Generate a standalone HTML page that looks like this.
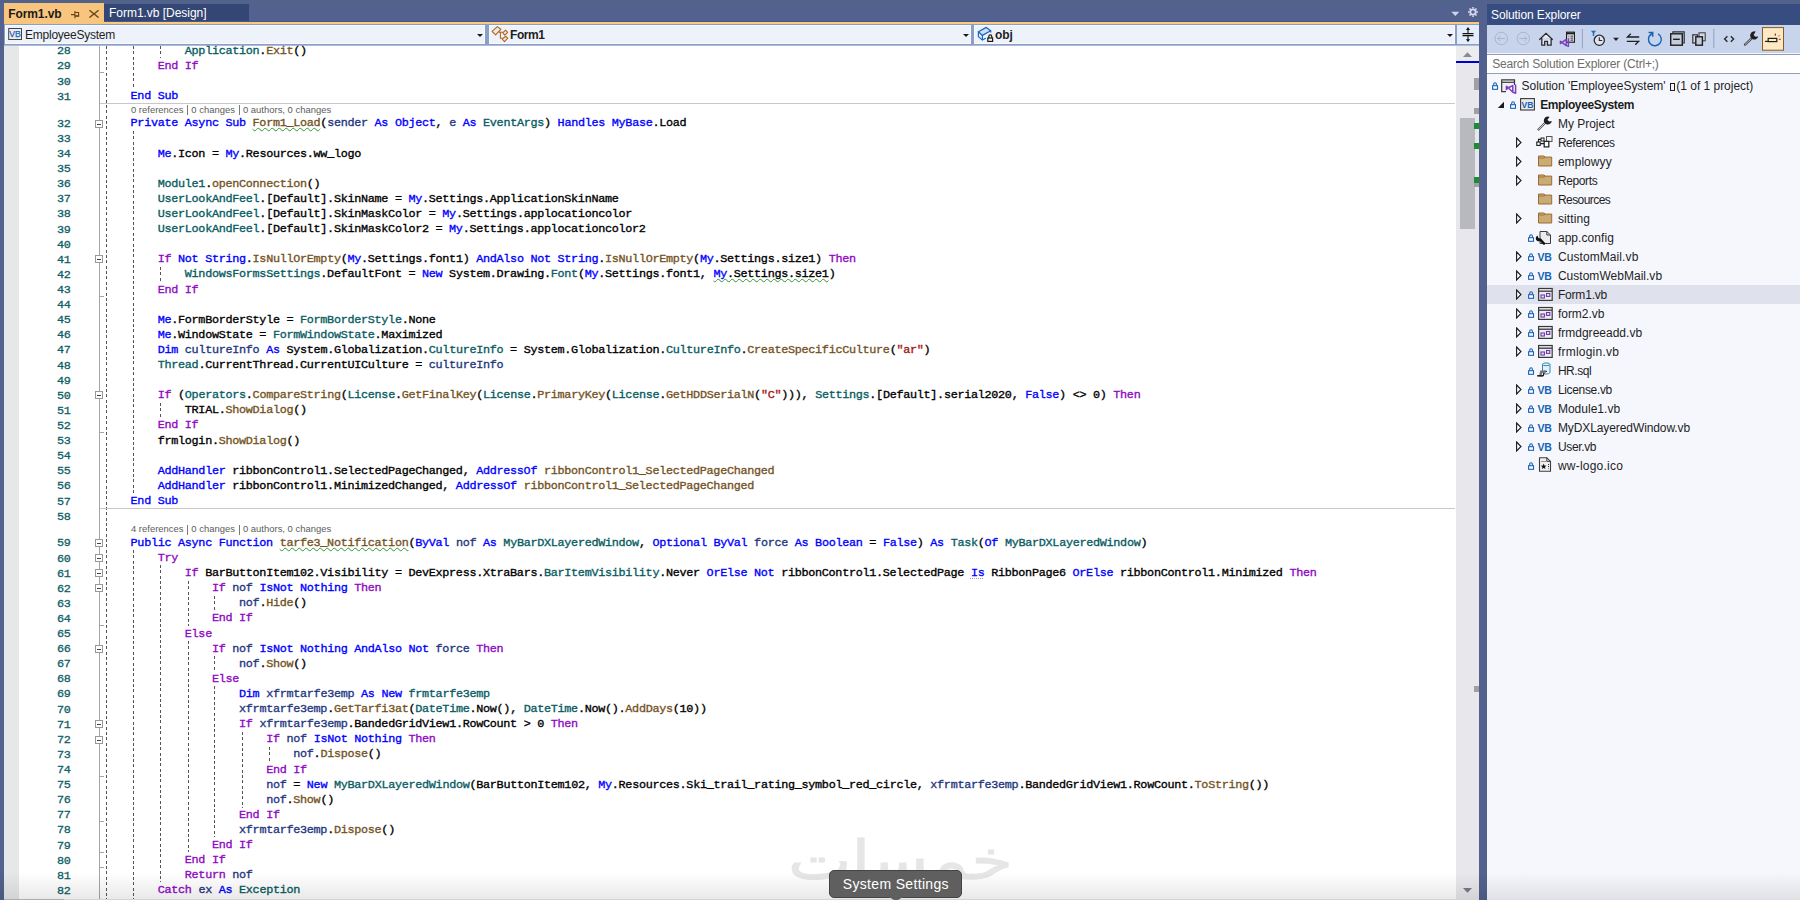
<!DOCTYPE html>
<html lang="en"><head><meta charset="utf-8"><title>Form1.vb - EmployeeSystem</title>
<style>
*{box-sizing:border-box;margin:0;padding:0}
html,body{width:1800px;height:900px;overflow:hidden}
body{position:relative;background:#52618d;font-family:"Liberation Sans",sans-serif;font-size:12px;color:#1e1e1e}
.abs,.abs>*{position:absolute}
/* tabs */
#tabA{left:4px;top:3px;width:100px;height:21px;background:#f8c57f;z-index:2}
#tabA span{position:absolute;left:4.3px;top:4px;font-weight:bold;font-size:12px;color:#1a1a1a;letter-spacing:-0.11px}
#tabB{left:104px;top:4px;width:145px;height:17px;background:#344674}
#tabB span{position:absolute;left:5px;top:2.3px;font-size:12px;color:#fff;letter-spacing:-0.03px}
#well{left:0;top:0;width:1800px;height:3px;background:#51638b;z-index:0}
#oline{left:4px;top:21px;width:1475px;height:3px;background:linear-gradient(to bottom,#44598f 0,#44598f .8px,#fdc97c .8px)}
/* nav */
#nav{left:4px;top:24px;width:1475px;height:22px;background:linear-gradient(to bottom,#8a9fc8 0,#8a9fc8 20.5px,#aebcda 21px,#aebcda 22px)}
.cb{top:1px;height:19px;background:#eef2fb;box-shadow:inset 0 0 0 1px #f8fafe}
.cb span{position:absolute;top:3px;font-size:12px;color:#1e1e1e;white-space:pre}
.cb .ar{position:absolute;right:2px;top:9px;width:0;height:0;border:3px solid transparent;border-top:3px solid #1a1a1a;border-bottom:0}
/* editor */
#ed{left:4px;top:46px;width:1452px;height:854px;background:#fff;overflow:hidden}
#mg{left:4px;top:46px;width:15px;height:854px;background:#e6e7e8}
#ol{left:99px;top:46px;width:1px;height:854px;background:#a5a5a5}
.ln{-webkit-text-stroke:0.3px;position:absolute;left:30px;width:40.5px;text-align:right;font:11.800px/15px "Liberation Mono",monospace;letter-spacing:-0.3032px;color:#0c6066;white-space:pre}
.cl{-webkit-text-stroke:0.34px;position:absolute;font:11.800px/15px "Liberation Mono",monospace;letter-spacing:-0.3032px;color:#000;white-space:pre}
.k{color:#0000ff}.c{color:#8f08c4}.t{color:#085c62}.m{color:#74531f}.v{color:#1f377f}.s{color:#a31515}
.sq{text-decoration:underline wavy #2f962f 1px;text-underline-offset:1.2px;text-decoration-skip-ink:none}
.dt{text-decoration:underline dotted #999 1px;text-underline-offset:2px;text-decoration-skip-ink:none}
.lens{position:absolute;left:131px;width:220px;height:12px;font-size:9.45px;line-height:12px;color:#5c5c5c;white-space:pre}
.lens span{position:absolute;top:0}
.lens i{position:absolute;top:1.5px;width:1px;height:10px;background:#7a7a7a}
.sep{position:absolute;left:100px;width:1355px;height:1px;background:#c8c8c8}
.bx{position:absolute;left:95px;width:8px;height:8px;background:#fff;border:1px solid #999}
.bx b{position:absolute;left:1px;top:2.5px;width:4px;height:1px;background:#444}
.tk{position:absolute;left:100px;width:4px;height:1px;background:#a5a5a5}
.gd{position:absolute;width:1px;background:repeating-linear-gradient(to bottom,#555 0,#555 3px,transparent 3px,transparent 5.36px)}
/* scrollbar */
#sb{left:1456px;top:46px;width:23px;height:854px;background:#e8e8ec}
#wm{left:788px;top:829px;font:67.5px/80px "DejaVu Sans","Noto Sans CJK SC",sans-serif;color:#e6e6e6;-webkit-text-stroke:1.2px #e6e6e6;white-space:nowrap;transform:scaleY(.8);transform-origin:0 0}
#shade{left:0;top:872px;width:1800px;height:28px;background:linear-gradient(to bottom,rgba(0,0,0,0),rgba(0,0,0,.09))}
#bl1{left:4px;top:899px;width:60px;height:1px;background:#adadad}
#bl2{left:64px;top:899px;width:1415px;height:1px;background:#d4d4d4}
#tip{left:829px;top:870px;width:133px;height:27.5px;background:#5f5f5f;border:1px solid #444;border-radius:5px}
#tip span{position:absolute;left:12.8px;top:5px;font-size:14px;line-height:16px;color:#fff;letter-spacing:.33px;white-space:pre}
</style></head><body>
<div class="abs" id="root">
<div id="well"></div>
<div id="tabA"><span>Form1.vb</span>
<svg style="position:absolute;left:67px;top:8px" width="9" height="8" viewBox="0 0 9 8"><path d="M0 3.6H3.8M3.9 0V7.2M3.9 1.5H7.6V5.2" fill="none" stroke="#6b4516" stroke-width="1.1"/><path d="M3.9 5H8.1" stroke="#6b4516" stroke-width="1.7"/></svg>
<svg style="position:absolute;left:85px;top:7px" width="10" height="8" viewBox="0 0 10 8"><path d="M.4 .2L9.6 7.6M9.6 .2L.4 7.6" stroke="#6b4516" stroke-width="1.3" fill="none"/></svg>
</div>
<div id="tabB"><span>Form1.vb [Design]</span></div>
<div id="oline"></div>
<svg style="left:1451px;top:11px" width="9" height="6" viewBox="0 0 9 6"><path d="M.3 .8H8.3L4.3 5Z" fill="#cdd5f0"/></svg>
<svg style="left:1467px;top:6px" width="12" height="12" viewBox="0 0 12 12"><g fill="none" stroke="#d5daf0"><circle cx="6" cy="6" r="2.7" stroke-width="1.8"/><path d="M6 1V2.6M6 9.4V11M1 6H2.6M9.4 6H11M2.5 2.5L3.6 3.6M8.4 8.4L9.5 9.5M2.5 9.5L3.6 8.4M8.4 3.6L9.5 2.5" stroke-width="1.5"/></g></svg>
<div id="nav" class="abs">
 <div class="cb" style="left:1px;width:480px"><svg style="position:absolute;left:3px;top:3px" width="14" height="12" viewBox="0 0 14 12"><rect x=".7" y=".5" width="12.8" height="11" fill="#ebebf0" stroke="#444"/><text x="7.1" y="9.2" font-family="Liberation Sans, sans-serif" font-size="8.6" fill="#1565c0" stroke="#1565c0" stroke-width=".25" text-anchor="middle">VB</text></svg><span style="left:20px;letter-spacing:-0.24px">EmployeeSystem</span><div class="ar"></div></div>
 <div class="cb" style="left:485px;width:482px"><svg style="position:absolute;left:2px;top:1px" width="18" height="17" viewBox="0 0 18 17"><g fill="#e9e9e9" stroke="#b5651d" stroke-width="1.1" stroke-linejoin="round"><path d="M6.3 .6L9.8 3.3L4.6 8.8L1.1 5.4Z"/><path d="M7.6 6.1H9.4V12.3H11.4M9.4 6.3H12" fill="none"/><path d="M14.5 4.1L16.7 6.3L13.8 9.2L11.8 6.8Z"/><path d="M14.9 10.3L16.7 12.2L13.5 15.7L11.1 13Z"/></g></svg><span style="left:21px;font-weight:bold;letter-spacing:-0.45px">Form1</span><div class="ar"></div></div>
 <div class="cb" style="left:970px;width:481px"><svg style="position:absolute;left:3px;top:1px" width="18" height="17" viewBox="0 0 18 17"><path d="M1.4 5.8L9.3 1.4L13.7 4.8L5.4 9.4Z" fill="#d5dcf2" stroke="#1468c4" stroke-width="1.3" stroke-linejoin="round"/><path d="M1.4 5.8V10.6L5.4 14.1V9.4M5.4 14.1L8.8 12.2M13.7 4.8V6.6" fill="none" stroke="#1468c4" stroke-width="1.2" stroke-linejoin="round"/><rect x="10.8" y="12" width="4.8" height="3.4" fill="#f4f4f4" stroke="#1a1a1a" stroke-width="1.2"/><path d="M11.8 12V10.4A1.5 1.6 0 0 1 14.8 10.4V12" fill="none" stroke="#1a1a1a" stroke-width="1.2"/></svg><span style="left:21px;font-weight:bold;letter-spacing:-0.13px">obj</span><div class="ar"></div></div>
 <div style="left:1453px;top:1px;width:22px;height:19px;background:#e4edf9"><svg width="22" height="19" viewBox="0 0 22 19"><path d="M5.5 8.6H16.5M5.5 10.6H16.5M11 2.6V8M11 11.2V16.6" fill="none" stroke="#111" stroke-width="1.1"/><path d="M8.8 5L11 2.4L13.2 5ZM8.8 14.2L11 16.8L13.2 14.2Z" fill="#111"/></svg></div>
</div>
<div id="ed"></div>
<div id="mg"></div>
<div id="ol"></div>
<div id="code" style="left:0;top:0;width:1456px;height:900px;overflow:hidden">
<div class="gd" style="left:106px;top:46px;height:854px"></div>
<div class="gd" style="left:133px;top:46px;height:42px"></div>
<div class="gd" style="left:133px;top:131px;height:363px"></div>
<div class="gd" style="left:133px;top:550px;height:350px"></div>
<div class="gd" style="left:160px;top:46px;height:12px"></div>
<div class="gd" style="left:160px;top:267px;height:15px"></div>
<div class="gd" style="left:160px;top:403px;height:15px"></div>
<div class="gd" style="left:160px;top:565px;height:317px"></div>
<div class="gd" style="left:188px;top:581px;height:45px"></div>
<div class="gd" style="left:188px;top:641px;height:211px"></div>
<div class="gd" style="left:214px;top:596px;height:15px"></div>
<div class="gd" style="left:214px;top:656px;height:15px"></div>
<div class="gd" style="left:214px;top:686px;height:151px"></div>
<div class="gd" style="left:242px;top:732px;height:76px"></div>
<div class="gd" style="left:269px;top:747px;height:15px"></div>
<div class="sep" style="top:103px"></div>
<div class="sep" style="top:508px"></div>
<div class="bx" style="top:120px"><b></b></div>
<div class="bx" style="top:255px"><b></b></div>
<div class="bx" style="top:391px"><b></b></div>
<div class="bx" style="top:539px"><b></b></div>
<div class="bx" style="top:554px"><b></b></div>
<div class="bx" style="top:569px"><b></b></div>
<div class="bx" style="top:584px"><b></b></div>
<div class="bx" style="top:645px"><b></b></div>
<div class="bx" style="top:720px"><b></b></div>
<div class="bx" style="top:736px"><b></b></div>
<div class="tk" style="top:72px"></div>
<div class="tk" style="top:296px"></div>
<div class="tk" style="top:432px"></div>
<div class="tk" style="top:625px"></div>
<div class="tk" style="top:776px"></div>
<div class="tk" style="top:821px"></div>
<div class="tk" style="top:852px"></div>
<div class="tk" style="top:867px"></div>
<div class="lens" style="top:103.53px"><span style="left:0">0 references</span><i style="left:56px"></i><span style="left:60.3px">0 changes</span><i style="left:107.6px"></i><span style="left:112px">0 authors, 0 changes</span></div>
<div class="lens" style="top:523.12px"><span style="left:0">4 references</span><i style="left:56px"></i><span style="left:60.3px">0 changes</span><i style="left:107.6px"></i><span style="left:112px">0 authors, 0 changes</span></div>
<div class="ln" style="top:44.30px">28</div>
<div class="cl" style="top:43.80px;left:184.82px"><span class="t">Application</span>.<span class="m">Exit</span>()</div>
<div class="ln" style="top:59.41px">29</div>
<div class="cl" style="top:58.91px;left:157.71px"><span class="c">End If</span></div>
<div class="ln" style="top:74.51px">30</div>
<div class="ln" style="top:89.62px">31</div>
<div class="cl" style="top:89.12px;left:130.60px"><span class="k">End Sub</span></div>
<div class="ln" style="top:116.83px">32</div>
<div class="cl" style="top:116.33px;left:130.60px"><span class="k">Private Async Sub</span> <span class="sq m">Form1_Load</span>(<span class="v">sender</span> <span class="k">As Object</span>, <span class="v">e</span> <span class="k">As</span> <span class="t">EventArgs</span>) <span class="k">Handles MyBase</span>.Load</div>
<div class="ln" style="top:131.94px">33</div>
<div class="ln" style="top:147.04px">34</div>
<div class="cl" style="top:146.54px;left:157.71px"><span class="k">Me</span>.Icon = <span class="k">My</span>.Resources.ww_logo</div>
<div class="ln" style="top:162.15px">35</div>
<div class="ln" style="top:177.26px">36</div>
<div class="cl" style="top:176.76px;left:157.71px"><span class="t">Module1</span>.<span class="m">openConnection</span>()</div>
<div class="ln" style="top:192.36px">37</div>
<div class="cl" style="top:191.86px;left:157.71px"><span class="t">UserLookAndFeel</span>.[Default].SkinName = <span class="k">My</span>.Settings.ApplicationSkinName</div>
<div class="ln" style="top:207.47px">38</div>
<div class="cl" style="top:206.97px;left:157.71px"><span class="t">UserLookAndFeel</span>.[Default].SkinMaskColor = <span class="k">My</span>.Settings.applocationcolor</div>
<div class="ln" style="top:222.58px">39</div>
<div class="cl" style="top:222.08px;left:157.71px"><span class="t">UserLookAndFeel</span>.[Default].SkinMaskColor2 = <span class="k">My</span>.Settings.applocationcolor2</div>
<div class="ln" style="top:237.68px">40</div>
<div class="ln" style="top:252.79px">41</div>
<div class="cl" style="top:252.29px;left:157.71px"><span class="c">If</span> <span class="k">Not String</span>.<span class="m">IsNullOrEmpty</span>(<span class="k">My</span>.Settings.font1) <span class="k">AndAlso Not String</span>.<span class="m">IsNullOrEmpty</span>(<span class="k">My</span>.Settings.size1) <span class="c">Then</span></div>
<div class="ln" style="top:267.90px">42</div>
<div class="cl" style="top:267.40px;left:184.82px"><span class="t">WindowsFormsSettings</span>.DefaultFont = <span class="k">New</span> System.Drawing.<span class="t">Font</span>(<span class="k">My</span>.Settings.font1, <span class="sq"><span class="k">My</span>.Settings.size1</span>)</div>
<div class="ln" style="top:283.00px">43</div>
<div class="cl" style="top:282.50px;left:157.71px"><span class="c">End If</span></div>
<div class="ln" style="top:298.11px">44</div>
<div class="ln" style="top:313.22px">45</div>
<div class="cl" style="top:312.72px;left:157.71px"><span class="k">Me</span>.FormBorderStyle = <span class="t">FormBorderStyle</span>.None</div>
<div class="ln" style="top:328.33px">46</div>
<div class="cl" style="top:327.83px;left:157.71px"><span class="k">Me</span>.WindowState = <span class="t">FormWindowState</span>.Maximized</div>
<div class="ln" style="top:343.43px">47</div>
<div class="cl" style="top:342.93px;left:157.71px"><span class="k">Dim</span> <span class="v">cultureInfo</span> <span class="k">As</span> System.Globalization.<span class="t">CultureInfo</span> = System.Globalization.<span class="t">CultureInfo</span>.<span class="m">CreateSpecificCulture</span>(<span class="s">&quot;ar&quot;</span>)</div>
<div class="ln" style="top:358.54px">48</div>
<div class="cl" style="top:358.04px;left:157.71px"><span class="t">Thread</span>.CurrentThread.CurrentUICulture = <span class="v">cultureInfo</span></div>
<div class="ln" style="top:373.65px">49</div>
<div class="ln" style="top:388.75px">50</div>
<div class="cl" style="top:388.25px;left:157.71px"><span class="c">If</span> (<span class="t">Operators</span>.<span class="m">CompareString</span>(<span class="t">License</span>.<span class="m">GetFinalKey</span>(<span class="t">License</span>.<span class="m">PrimaryKey</span>(<span class="t">License</span>.<span class="m">GetHDDSerialN</span>(<span class="s">&quot;C&quot;</span>))), <span class="t">Settings</span>.[Default].serial2020, <span class="k">False</span>) &lt;&gt; 0) <span class="c">Then</span></div>
<div class="ln" style="top:403.86px">51</div>
<div class="cl" style="top:403.36px;left:184.82px">TRIAL.<span class="m">ShowDialog</span>()</div>
<div class="ln" style="top:418.97px">52</div>
<div class="cl" style="top:418.47px;left:157.71px"><span class="c">End If</span></div>
<div class="ln" style="top:434.07px">53</div>
<div class="cl" style="top:433.57px;left:157.71px">frmlogin.<span class="m">ShowDialog</span>()</div>
<div class="ln" style="top:449.18px">54</div>
<div class="ln" style="top:464.29px">55</div>
<div class="cl" style="top:463.79px;left:157.71px"><span class="k">AddHandler</span> ribbonControl1.SelectedPageChanged, <span class="k">AddressOf</span> <span class="m">ribbonControl1_SelectedPageChanged</span></div>
<div class="ln" style="top:479.40px">56</div>
<div class="cl" style="top:478.90px;left:157.71px"><span class="k">AddHandler</span> ribbonControl1.MinimizedChanged, <span class="k">AddressOf</span> <span class="m">ribbonControl1_SelectedPageChanged</span></div>
<div class="ln" style="top:494.50px">57</div>
<div class="cl" style="top:494.00px;left:130.60px"><span class="k">End Sub</span></div>
<div class="ln" style="top:509.61px">58</div>
<div class="ln" style="top:536.42px">59</div>
<div class="cl" style="top:535.92px;left:130.60px"><span class="k">Public Async Function</span> <span class="sq m">tarfe3_Notification</span>(<span class="k">ByVal</span> <span class="v">nof</span> <span class="k">As</span> <span class="t">MyBarDXLayeredWindow</span>, <span class="k">Optional ByVal</span> <span class="v">force</span> <span class="k">As Boolean</span> = <span class="k">False</span>) <span class="k">As</span> <span class="t">Task</span>(<span class="k">Of</span> <span class="t">MyBarDXLayeredWindow</span>)</div>
<div class="ln" style="top:551.52px">60</div>
<div class="cl" style="top:551.02px;left:157.71px"><span class="c">Try</span></div>
<div class="ln" style="top:566.63px">61</div>
<div class="cl" style="top:566.13px;left:184.82px"><span class="c">If</span> BarButtonItem102.Visibility = DevExpress.XtraBars.<span class="t">BarItemVisibility</span>.Never <span class="k">OrElse Not</span> ribbonControl1.SelectedPage <span class="dt"><span class="k">Is</span></span> RibbonPage6 <span class="k">OrElse</span> ribbonControl1.Minimized <span class="c">Then</span></div>
<div class="ln" style="top:581.74px">62</div>
<div class="cl" style="top:581.24px;left:211.94px"><span class="c">If</span> <span class="v">nof</span> <span class="k">IsNot Nothing</span> <span class="c">Then</span></div>
<div class="ln" style="top:596.85px">63</div>
<div class="cl" style="top:596.35px;left:239.05px"><span class="v">nof</span>.<span class="m">Hide</span>()</div>
<div class="ln" style="top:611.95px">64</div>
<div class="cl" style="top:611.45px;left:211.94px"><span class="c">End If</span></div>
<div class="ln" style="top:627.06px">65</div>
<div class="cl" style="top:626.56px;left:184.82px"><span class="c">Else</span></div>
<div class="ln" style="top:642.17px">66</div>
<div class="cl" style="top:641.67px;left:211.94px"><span class="c">If</span> <span class="v">nof</span> <span class="k">IsNot Nothing AndAlso Not</span> <span class="v">force</span> <span class="c">Then</span></div>
<div class="ln" style="top:657.27px">67</div>
<div class="cl" style="top:656.77px;left:239.05px"><span class="v">nof</span>.<span class="m">Show</span>()</div>
<div class="ln" style="top:672.38px">68</div>
<div class="cl" style="top:671.88px;left:211.94px"><span class="c">Else</span></div>
<div class="ln" style="top:687.49px">69</div>
<div class="cl" style="top:686.99px;left:239.05px"><span class="k">Dim</span> <span class="v">xfrmtarfe3emp</span> <span class="k">As New</span> <span class="t">frmtarfe3emp</span></div>
<div class="ln" style="top:702.59px">70</div>
<div class="cl" style="top:702.09px;left:239.05px"><span class="v">xfrmtarfe3emp</span>.<span class="m">GetTarfi3at</span>(<span class="t">DateTime</span>.Now(), <span class="t">DateTime</span>.Now().<span class="m">AddDays</span>(10))</div>
<div class="ln" style="top:717.70px">71</div>
<div class="cl" style="top:717.20px;left:239.05px"><span class="c">If</span> <span class="v">xfrmtarfe3emp</span>.BandedGridView1.RowCount &gt; 0 <span class="c">Then</span></div>
<div class="ln" style="top:732.81px">72</div>
<div class="cl" style="top:732.31px;left:266.16px"><span class="c">If</span> <span class="v">nof</span> <span class="k">IsNot Nothing</span> <span class="c">Then</span></div>
<div class="ln" style="top:747.91px">73</div>
<div class="cl" style="top:747.41px;left:293.27px"><span class="v">nof</span>.<span class="m">Dispose</span>()</div>
<div class="ln" style="top:763.02px">74</div>
<div class="cl" style="top:762.52px;left:266.16px"><span class="c">End If</span></div>
<div class="ln" style="top:778.13px">75</div>
<div class="cl" style="top:777.63px;left:266.16px"><span class="v">nof</span> = <span class="k">New</span> <span class="t">MyBarDXLayeredWindow</span>(BarButtonItem102, <span class="k">My</span>.Resources.Ski_trail_rating_symbol_red_circle, <span class="v">xfrmtarfe3emp</span>.BandedGridView1.RowCount.<span class="m">ToString</span>())</div>
<div class="ln" style="top:793.24px">76</div>
<div class="cl" style="top:792.74px;left:266.16px"><span class="v">nof</span>.<span class="m">Show</span>()</div>
<div class="ln" style="top:808.34px">77</div>
<div class="cl" style="top:807.84px;left:239.05px"><span class="c">End If</span></div>
<div class="ln" style="top:823.45px">78</div>
<div class="cl" style="top:822.95px;left:239.05px"><span class="v">xfrmtarfe3emp</span>.<span class="m">Dispose</span>()</div>
<div class="ln" style="top:838.56px">79</div>
<div class="cl" style="top:838.06px;left:211.94px"><span class="c">End If</span></div>
<div class="ln" style="top:853.66px">80</div>
<div class="cl" style="top:853.16px;left:184.82px"><span class="c">End If</span></div>
<div class="ln" style="top:868.77px">81</div>
<div class="cl" style="top:868.27px;left:184.82px"><span class="c">Return</span> <span class="v">nof</span></div>
<div class="ln" style="top:883.88px">82</div>
<div class="cl" style="top:883.38px;left:157.71px"><span class="c">Catch</span> <span class="v">ex</span> <span class="k">As</span> <span class="t">Exception</span></div>
</div>
<div id="sb" class="abs">
<div style="left:0;top:0;width:23px;height:16px;background:#ececee"></div>
<svg style="left:7px;top:6px" width="9" height="5" viewBox="0 0 9 5"><path d="M0 5L4.5 .3L9 5Z" fill="#868999"/></svg>
<div style="left:0;top:15px;width:23px;height:2px;background:#0000cc"></div>
<div style="left:18px;top:32px;width:5px;height:12px;background:#a0a0a0"></div>
<div style="left:18px;top:62px;width:5px;height:6px;background:#a0a0a0"></div>
<div style="left:4px;top:72px;width:15px;height:111px;background:#b8b9bf"></div>
<div style="left:18px;top:77px;width:5px;height:6px;background:#1e8c2e"></div>
<div style="left:18px;top:97px;width:5px;height:6px;background:#1e8c2e"></div>
<div style="left:18px;top:131px;width:5px;height:6px;background:#1e8c2e"></div>
<div style="left:18px;top:137px;width:5px;height:4px;background:#a0a0a0"></div>
<div style="left:18px;top:640px;width:5px;height:6px;background:#a0a0a0"></div>
<svg style="left:7px;top:842px" width="9" height="5" viewBox="0 0 9 5"><path d="M0 0L4.5 4.7L9 0Z" fill="#777a8c"/></svg>
</div>
<style>
#se{left:1487px;top:4px;width:313px;height:896px;background:#f5f7fd}
#setitle{left:0;top:0;width:313px;height:21px;background:#374c80}
#setitle span{position:absolute;left:4px;top:4px;color:#fff;font-size:12px;letter-spacing:-0.1px;white-space:pre}
#setb{left:0;top:21px;width:313px;height:28px;background:#c8d3ec}
#sesearch{left:0;top:50px;width:313px;height:20px;background:#fff;border-top:1px solid #8e9bbc;border-bottom:1px solid #929dbb}
#sesearch span{position:absolute;left:5.3px;top:2px;color:#6d6d6d;font-size:12px;letter-spacing:-0.205px;white-space:pre}
#setree{left:0;top:0;width:313px;height:896px}
.tx{white-space:pre;font-size:12px;line-height:15px;color:#1e1e1e}
.tofu{display:inline-block;width:5px;height:8px;border:1px solid #1e1e1e;margin:0 1.5px 0 1px;vertical-align:-0.5px}
</style>
<div id="se" class="abs">
<div id="setitle"><span>Solution Explorer</span></div>
<div id="setb" class="abs"><svg style="left:0;top:0" width="313" height="28" viewBox="0 0 313 28">
<g fill="none" stroke="#a9b4d0" stroke-width="1"><circle cx="14.3" cy="13.5" r="6.2"/><path d="M18.2 13.5H10.6M13.3 10.8L10.6 13.5L13.3 16.2"/><circle cx="36.3" cy="13.5" r="6.2"/><path d="M32.4 13.5H40M37.3 10.8L40 13.5L37.3 16.2"/></g>
<path d="M52.3 14.8L59 8.3L65.7 14.8M54.8 13.2V20.2H57.7V16.4H60.5V20.2H64.1V13.2" fill="#e4e8f4" stroke="#2a2a2a" stroke-width="1.3"/>
<rect x="79.6" y="7.2" width="7.8" height="10" fill="#f2f4fa" stroke="#1e1e1e" stroke-width="1.2"/><path d="M79.6 8.6H87.4" stroke="#1e1e1e" stroke-width="1.5"/><path d="M81.4 11.1H82.4M83.4 11.1H86M81.4 13.1H82.4M83.4 13.1H86M81.4 15.1H82.4M83.4 15.1H86" stroke="#1e1e1e" stroke-width="1"/>
<path d="M81.4 13.6V21.4L78.8 20.4L75 17.4L73.4 18.6V16.2L75 17.4L79.2 14.4V20.2" fill="none" stroke="#7a3fc0" stroke-width="1.4" stroke-linejoin="round"/>
<path d="M95.4 4V23.5" stroke="#93a1c4" stroke-width="1"/>
<path d="M103.8 5.8H109.2L107.2 7.9V10.9H105.8V7.9Z" fill="#1c6fc4"/>
<circle cx="112.3" cy="15.3" r="5.1" fill="#dfe3ef" stroke="#2a2a2a" stroke-width="1.3"/><path d="M112.3 12.2V15.5H115.2" fill="none" stroke="#2a2a2a" stroke-width="1.1"/>
<path d="M126.1 12.8H131.9L129 15.9Z" fill="#1e1e1e"/>
<path d="M152.2 12H140.4L143.8 8.7M139.8 16.4H151.6L148.2 19.7" fill="none" stroke="#1e1e1e" stroke-width="1.3"/>
<path d="M171.1 8.8A6.4 6.4 0 1 1 164.2 9.1" fill="none" stroke="#1464b4" stroke-width="1.4"/><path d="M161.6 7.6H165.7V11.7" fill="none" stroke="#1464b4" stroke-width="1.5"/><path d="M163 10.4L165.5 7.8" stroke="#1464b4" stroke-width="1.4"/>
<path d="M185.9 8V6.8H197.2V18H196" fill="none" stroke="#2e2e2e" stroke-width="1.2"/><rect x="183.7" y="8.8" width="11.6" height="11.4" fill="#c5ccde" stroke="#1e1e1e" stroke-width="1.4"/><path d="M186.1 14.3H192.8" stroke="#1e1e1e" stroke-width="1.4"/>
<rect x="212" y="7.8" width="6.2" height="8" fill="#d3d9e8" stroke="#444" stroke-width="1.1"/><rect x="205.8" y="9.8" width="4.6" height="8.2" fill="#d3d9e8" stroke="#333" stroke-width="1.2"/><rect x="208.8" y="11.8" width="6.6" height="8.4" fill="#c5ccde" stroke="#1e1e1e" stroke-width="1.4"/>
<path d="M226.8 3.7V23.2" stroke="#93a1c4" stroke-width="1"/>
<path d="M240.4 11.2L237.6 14L240.4 16.8M243.8 11.2L246.6 14L243.8 16.8" fill="none" stroke="#2a2a2a" stroke-width="1.4"/>
<path d="M258 19.6L264.4 13.6" stroke="#4a4a4a" stroke-width="2.3" stroke-linecap="round"/><path d="M258.3 19.3L264 14" stroke="#dfe3ee" stroke-width=".7" stroke-linecap="round"/><path d="M268.6 6.6A4.1 4.1 0 1 0 271.2 11.6L268.4 11.8L266.6 10Z" fill="#1e1e1e"/>
<rect x="275.5" y="2.6" width="21" height="22.6" fill="#ffe8c4" stroke="#8a5a22"/>
<path d="M278.1 16.4H281.2" stroke="#1e1e1e" stroke-width="1.2"/><rect x="281.2" y="13.4" width="8.6" height="3.2" fill="#f5f0b8" stroke="#1e1e1e" stroke-width="1.2"/>
<path d="M288.3 8.6V10.8M293.8 14.3H291.8" stroke="#8b2a14" stroke-width="1.1"/><path d="M291.4 11.4L292.6 10.2" stroke="#e0782a" stroke-width="1.1"/>
</svg>
</div>
<div id="sesearch"><span>Search Solution Explorer (Ctrl+;)</span></div>
<div id="setree" class="abs">
<div style="left:0;top:281px;width:313px;height:19px;background:#dfe2ed"></div>
<svg style="left:5px;top:78px" width="7" height="8" viewBox="0 0 7 8"><path d="M1.7 3.6V2.3A1.35 1.5 0 0 1 4.4 2.3V3.6" fill="none" stroke="#1762b8" stroke-width="1.1"/><rect x=".6" y="3.7" width="4.9" height="3.6" fill="#fff" stroke="#1762b8" stroke-width="1.1"/></svg>
<svg style="left:14px;top:75px" width="16" height="15" viewBox="0 0 16 15"><path d="M5 12.6H.7V.9H13.5V6" fill="#f0f0f4" stroke="#3a3a3a" stroke-width="1.2"/><path d="M.7 3.3H13.5" stroke="#3a3a3a" stroke-width="1.2"/><path d="M14.6 5.4V14.2L11.6 13L7.2 8.8L5.4 10.4V7.2L7.2 8.8L11.8 6.6V13" fill="none" stroke="#7a3fc0" stroke-width="1.5" stroke-linejoin="round"/></svg>
<span class="tx" style="left:34.5px;top:75.0px;letter-spacing:-0.025px">Solution 'EmployeeSystem' <i class="tofu"></i>(1 of 1 project)</span>
<svg style="left:10px;top:97px" width="8" height="8" viewBox="0 0 8 8"><path d="M7 .8V7H.8Z" fill="#1a1a1a"/></svg>
<svg style="left:23px;top:97px" width="7" height="8" viewBox="0 0 7 8"><path d="M1.7 3.6V2.3A1.35 1.5 0 0 1 4.4 2.3V3.6" fill="none" stroke="#1762b8" stroke-width="1.1"/><rect x=".6" y="3.7" width="4.9" height="3.6" fill="#fff" stroke="#1762b8" stroke-width="1.1"/></svg>
<svg style="left:33px;top:94px" width="15" height="13" viewBox="0 0 15 13"><rect x=".6" y=".6" width="13.8" height="11.4" fill="#e9e9ee" stroke="#3a3a3a" stroke-width="1.1"/><text x="7.5" y="9.6" font-family="Liberation Sans, sans-serif" font-weight="bold" font-size="8.6" fill="#1863b5" text-anchor="middle">VB</text></svg>
<span class="tx" style="left:53.2px;top:94.0px;letter-spacing:-0.399px;font-weight:bold;">EmployeeSystem</span>
<svg style="left:50px;top:112px" width="16" height="15" viewBox="0 0 16 15"><path d="M1.5 13.5L8.5 6.5" stroke="#555" stroke-width="2.2" stroke-linecap="round"/><path d="M1.7 13.3L8.3 6.7" stroke="#e8e8e8" stroke-width=".8" stroke-linecap="round"/><path d="M12.6 1A4 4 0 1 0 14.8 5L12.2 5.6L10.4 3.8Z" fill="#1e1e1e"/></svg>
<span class="tx" style="left:70.9px;top:113.0px;letter-spacing:-0.008px;">My Project</span>
<svg style="left:28px;top:133px" width="7" height="11" viewBox="0 0 7 11"><path d="M1.6 1L6 5.5L1.6 10Z" fill="#fff" stroke="#1a1a1a" stroke-width="1.1"/></svg>
<svg style="left:49px;top:132px" width="17" height="12" viewBox="0 0 17 12"><rect x="10.5" y=".5" width="5.5" height="5" fill="#f4f4f8" stroke="#555"/><rect x=".8" y="6" width="3.4" height="3.4" fill="#fff" stroke="#1a1a1a" stroke-width="1.1"/><rect x="8.2" y="5.3" width="4.6" height="5.6" fill="#fff" stroke="#1a1a1a" stroke-width="1.2"/><path d="M2.5 6V3.4H6M4.5 7.6H8" fill="none" stroke="#1a1a1a" stroke-width="1.1"/><rect x="5" y="2" width="3" height="3" fill="#fff" stroke="#1a1a1a" stroke-width="1"/></svg>
<span class="tx" style="left:70.9px;top:132.0px;letter-spacing:-0.476px;">References</span>
<svg style="left:28px;top:152px" width="7" height="11" viewBox="0 0 7 11"><path d="M1.6 1L6 5.5L1.6 10Z" fill="#fff" stroke="#1a1a1a" stroke-width="1.1"/></svg>
<svg style="left:51px;top:151px" width="15" height="12" viewBox="0 0 15 12"><path d="M.5 11V1H6.1L7 2.1H13.7V11Z" fill="#c9ac74" stroke="#9e6a33"/><path d="M.5 3H6.4L7 2.1" fill="none" stroke="#9e6a33" stroke-width=".9"/></svg>
<span class="tx" style="left:70.9px;top:151.0px;letter-spacing:0.056px;">emplowyy</span>
<svg style="left:28px;top:171px" width="7" height="11" viewBox="0 0 7 11"><path d="M1.6 1L6 5.5L1.6 10Z" fill="#fff" stroke="#1a1a1a" stroke-width="1.1"/></svg>
<svg style="left:51px;top:170px" width="15" height="12" viewBox="0 0 15 12"><path d="M.5 11V1H6.1L7 2.1H13.7V11Z" fill="#c9ac74" stroke="#9e6a33"/><path d="M.5 3H6.4L7 2.1" fill="none" stroke="#9e6a33" stroke-width=".9"/></svg>
<span class="tx" style="left:70.9px;top:170.0px;letter-spacing:-0.374px;">Reports</span>
<svg style="left:51px;top:189px" width="15" height="12" viewBox="0 0 15 12"><path d="M.5 11V1H6.1L7 2.1H13.7V11Z" fill="#c9ac74" stroke="#9e6a33"/><path d="M.5 3H6.4L7 2.1" fill="none" stroke="#9e6a33" stroke-width=".9"/></svg>
<span class="tx" style="left:70.9px;top:189.0px;letter-spacing:-0.551px;">Resources</span>
<svg style="left:28px;top:209px" width="7" height="11" viewBox="0 0 7 11"><path d="M1.6 1L6 5.5L1.6 10Z" fill="#fff" stroke="#1a1a1a" stroke-width="1.1"/></svg>
<svg style="left:51px;top:208px" width="15" height="12" viewBox="0 0 15 12"><path d="M.5 11V1H6.1L7 2.1H13.7V11Z" fill="#c9ac74" stroke="#9e6a33"/><path d="M.5 3H6.4L7 2.1" fill="none" stroke="#9e6a33" stroke-width=".9"/></svg>
<span class="tx" style="left:70.9px;top:208.0px;letter-spacing:0.122px;">sitting</span>
<svg style="left:41px;top:230px" width="7" height="8" viewBox="0 0 7 8"><path d="M1.7 3.6V2.3A1.35 1.5 0 0 1 4.4 2.3V3.6" fill="none" stroke="#1762b8" stroke-width="1.1"/><rect x=".6" y="3.7" width="4.9" height="3.6" fill="#fff" stroke="#1762b8" stroke-width="1.1"/></svg>
<svg style="left:48px;top:226px" width="17" height="15" viewBox="0 0 17 15"><path d="M5 1.5H11.8L15.5 5V13.5H5Z" fill="#ececf0" stroke="#3c3c3c"/><path d="M11.8 1.5V5H15.5" fill="none" stroke="#3c3c3c"/><path d="M9 13.6L5 9.4" stroke="#111" stroke-width="2.4" stroke-linecap="round"/><path d="M2.6 5.6A3 3 0 1 0 6.6 9.4L4.8 9.2L3.2 7.6Z" fill="#111"/></svg>
<span class="tx" style="left:70.9px;top:227.0px;letter-spacing:0.062px;">app.config</span>
<svg style="left:28px;top:247px" width="7" height="11" viewBox="0 0 7 11"><path d="M1.6 1L6 5.5L1.6 10Z" fill="#fff" stroke="#1a1a1a" stroke-width="1.1"/></svg>
<svg style="left:41px;top:249px" width="7" height="8" viewBox="0 0 7 8"><path d="M1.7 3.6V2.3A1.35 1.5 0 0 1 4.4 2.3V3.6" fill="none" stroke="#1762b8" stroke-width="1.1"/><rect x=".6" y="3.7" width="4.9" height="3.6" fill="#fff" stroke="#1762b8" stroke-width="1.1"/></svg>
<svg style="left:50px;top:247px" width="16" height="12" viewBox="0 0 16 12"><text x="7.5" y="9.6" font-family="Liberation Sans, sans-serif" font-weight="bold" font-size="10.5" fill="#1863b5" text-anchor="middle" letter-spacing="-0.2">VB</text></svg>
<span class="tx" style="left:70.9px;top:246.0px;letter-spacing:0.088px;">CustomMail.vb</span>
<svg style="left:28px;top:266px" width="7" height="11" viewBox="0 0 7 11"><path d="M1.6 1L6 5.5L1.6 10Z" fill="#fff" stroke="#1a1a1a" stroke-width="1.1"/></svg>
<svg style="left:41px;top:268px" width="7" height="8" viewBox="0 0 7 8"><path d="M1.7 3.6V2.3A1.35 1.5 0 0 1 4.4 2.3V3.6" fill="none" stroke="#1762b8" stroke-width="1.1"/><rect x=".6" y="3.7" width="4.9" height="3.6" fill="#fff" stroke="#1762b8" stroke-width="1.1"/></svg>
<svg style="left:50px;top:266px" width="16" height="12" viewBox="0 0 16 12"><text x="7.5" y="9.6" font-family="Liberation Sans, sans-serif" font-weight="bold" font-size="10.5" fill="#1863b5" text-anchor="middle" letter-spacing="-0.2">VB</text></svg>
<span class="tx" style="left:70.9px;top:265.0px;letter-spacing:0.024px;">CustomWebMail.vb</span>
<svg style="left:28px;top:285px" width="7" height="11" viewBox="0 0 7 11"><path d="M1.6 1L6 5.5L1.6 10Z" fill="#fff" stroke="#1a1a1a" stroke-width="1.1"/></svg>
<svg style="left:41px;top:287px" width="7" height="8" viewBox="0 0 7 8"><path d="M1.7 3.6V2.3A1.35 1.5 0 0 1 4.4 2.3V3.6" fill="none" stroke="#1762b8" stroke-width="1.1"/><rect x=".6" y="3.7" width="4.9" height="3.6" fill="#fff" stroke="#1762b8" stroke-width="1.1"/></svg>
<svg style="left:51px;top:283px" width="15" height="14" viewBox="0 0 15 14"><rect x=".6" y="1.5" width="13.6" height="11.9" fill="#ececf1" stroke="#3a3a3a" stroke-width="1.2"/><path d="M.6 4.2H14.2" stroke="#3a3a3a" stroke-width="1.3"/><rect x="3" y="8" width="3.4" height="3" fill="#efe9f7" stroke="#6a38ab" stroke-width="1.1"/><rect x="8.5" y="6.5" width="3.3" height="2.9" fill="#efe9f7" stroke="#6a38ab" stroke-width="1.1"/></svg>
<span class="tx" style="left:70.9px;top:284.0px;letter-spacing:-0.185px;">Form1.vb</span>
<svg style="left:28px;top:304px" width="7" height="11" viewBox="0 0 7 11"><path d="M1.6 1L6 5.5L1.6 10Z" fill="#fff" stroke="#1a1a1a" stroke-width="1.1"/></svg>
<svg style="left:41px;top:306px" width="7" height="8" viewBox="0 0 7 8"><path d="M1.7 3.6V2.3A1.35 1.5 0 0 1 4.4 2.3V3.6" fill="none" stroke="#1762b8" stroke-width="1.1"/><rect x=".6" y="3.7" width="4.9" height="3.6" fill="#fff" stroke="#1762b8" stroke-width="1.1"/></svg>
<svg style="left:51px;top:302px" width="15" height="14" viewBox="0 0 15 14"><rect x=".6" y="1.5" width="13.6" height="11.9" fill="#ececf1" stroke="#3a3a3a" stroke-width="1.2"/><path d="M.6 4.2H14.2" stroke="#3a3a3a" stroke-width="1.3"/><rect x="3" y="8" width="3.4" height="3" fill="#efe9f7" stroke="#6a38ab" stroke-width="1.1"/><rect x="8.5" y="6.5" width="3.3" height="2.9" fill="#efe9f7" stroke="#6a38ab" stroke-width="1.1"/></svg>
<span class="tx" style="left:70.9px;top:303.0px;letter-spacing:-0.010px;">form2.vb</span>
<svg style="left:28px;top:323px" width="7" height="11" viewBox="0 0 7 11"><path d="M1.6 1L6 5.5L1.6 10Z" fill="#fff" stroke="#1a1a1a" stroke-width="1.1"/></svg>
<svg style="left:41px;top:325px" width="7" height="8" viewBox="0 0 7 8"><path d="M1.7 3.6V2.3A1.35 1.5 0 0 1 4.4 2.3V3.6" fill="none" stroke="#1762b8" stroke-width="1.1"/><rect x=".6" y="3.7" width="4.9" height="3.6" fill="#fff" stroke="#1762b8" stroke-width="1.1"/></svg>
<svg style="left:51px;top:321px" width="15" height="14" viewBox="0 0 15 14"><rect x=".6" y="1.5" width="13.6" height="11.9" fill="#ececf1" stroke="#3a3a3a" stroke-width="1.2"/><path d="M.6 4.2H14.2" stroke="#3a3a3a" stroke-width="1.3"/><rect x="3" y="8" width="3.4" height="3" fill="#efe9f7" stroke="#6a38ab" stroke-width="1.1"/><rect x="8.5" y="6.5" width="3.3" height="2.9" fill="#efe9f7" stroke="#6a38ab" stroke-width="1.1"/></svg>
<span class="tx" style="left:70.9px;top:322.0px;letter-spacing:0.011px;">frmdgreeadd.vb</span>
<svg style="left:28px;top:342px" width="7" height="11" viewBox="0 0 7 11"><path d="M1.6 1L6 5.5L1.6 10Z" fill="#fff" stroke="#1a1a1a" stroke-width="1.1"/></svg>
<svg style="left:41px;top:344px" width="7" height="8" viewBox="0 0 7 8"><path d="M1.7 3.6V2.3A1.35 1.5 0 0 1 4.4 2.3V3.6" fill="none" stroke="#1762b8" stroke-width="1.1"/><rect x=".6" y="3.7" width="4.9" height="3.6" fill="#fff" stroke="#1762b8" stroke-width="1.1"/></svg>
<svg style="left:51px;top:340px" width="15" height="14" viewBox="0 0 15 14"><rect x=".6" y="1.5" width="13.6" height="11.9" fill="#ececf1" stroke="#3a3a3a" stroke-width="1.2"/><path d="M.6 4.2H14.2" stroke="#3a3a3a" stroke-width="1.3"/><rect x="3" y="8" width="3.4" height="3" fill="#efe9f7" stroke="#6a38ab" stroke-width="1.1"/><rect x="8.5" y="6.5" width="3.3" height="2.9" fill="#efe9f7" stroke="#6a38ab" stroke-width="1.1"/></svg>
<span class="tx" style="left:70.9px;top:341.0px;letter-spacing:0.228px;">frmlogin.vb</span>
<svg style="left:41px;top:363px" width="7" height="8" viewBox="0 0 7 8"><path d="M1.7 3.6V2.3A1.35 1.5 0 0 1 4.4 2.3V3.6" fill="none" stroke="#1762b8" stroke-width="1.1"/><rect x=".6" y="3.7" width="4.9" height="3.6" fill="#fff" stroke="#1762b8" stroke-width="1.1"/></svg>
<svg style="left:49px;top:358px" width="16" height="16" viewBox="0 0 16 16"><path d="M6.5 2.3V10.5C6.5 11.4 8.3 12 10.2 12S14 11.4 14 10.5V2.3" fill="#e6f0f8" stroke="#2b8bb0"/><ellipse cx="10.2" cy="2.3" rx="3.7" ry="1.4" fill="#e6f0f8" stroke="#2b8bb0"/><path d="M3.2 13.6H7.3L8.2 9.4H10.8" fill="none" stroke="#222" stroke-width="1.3"/><path d="M4.4 13L5.2 9.8H9.6" fill="none" stroke="#777" stroke-width="2.4"/><path d="M1.2 13.8H6.8" stroke="#222" stroke-width="1.6"/></svg>
<span class="tx" style="left:70.9px;top:360.0px;letter-spacing:-0.451px;">HR.sql</span>
<svg style="left:28px;top:380px" width="7" height="11" viewBox="0 0 7 11"><path d="M1.6 1L6 5.5L1.6 10Z" fill="#fff" stroke="#1a1a1a" stroke-width="1.1"/></svg>
<svg style="left:41px;top:382px" width="7" height="8" viewBox="0 0 7 8"><path d="M1.7 3.6V2.3A1.35 1.5 0 0 1 4.4 2.3V3.6" fill="none" stroke="#1762b8" stroke-width="1.1"/><rect x=".6" y="3.7" width="4.9" height="3.6" fill="#fff" stroke="#1762b8" stroke-width="1.1"/></svg>
<svg style="left:50px;top:380px" width="16" height="12" viewBox="0 0 16 12"><text x="7.5" y="9.6" font-family="Liberation Sans, sans-serif" font-weight="bold" font-size="10.5" fill="#1863b5" text-anchor="middle" letter-spacing="-0.2">VB</text></svg>
<span class="tx" style="left:70.9px;top:379.0px;letter-spacing:-0.337px;">License.vb</span>
<svg style="left:28px;top:399px" width="7" height="11" viewBox="0 0 7 11"><path d="M1.6 1L6 5.5L1.6 10Z" fill="#fff" stroke="#1a1a1a" stroke-width="1.1"/></svg>
<svg style="left:41px;top:401px" width="7" height="8" viewBox="0 0 7 8"><path d="M1.7 3.6V2.3A1.35 1.5 0 0 1 4.4 2.3V3.6" fill="none" stroke="#1762b8" stroke-width="1.1"/><rect x=".6" y="3.7" width="4.9" height="3.6" fill="#fff" stroke="#1762b8" stroke-width="1.1"/></svg>
<svg style="left:50px;top:399px" width="16" height="12" viewBox="0 0 16 12"><text x="7.5" y="9.6" font-family="Liberation Sans, sans-serif" font-weight="bold" font-size="10.5" fill="#1863b5" text-anchor="middle" letter-spacing="-0.2">VB</text></svg>
<span class="tx" style="left:70.9px;top:398.0px;letter-spacing:0.016px;">Module1.vb</span>
<svg style="left:28px;top:418px" width="7" height="11" viewBox="0 0 7 11"><path d="M1.6 1L6 5.5L1.6 10Z" fill="#fff" stroke="#1a1a1a" stroke-width="1.1"/></svg>
<svg style="left:41px;top:420px" width="7" height="8" viewBox="0 0 7 8"><path d="M1.7 3.6V2.3A1.35 1.5 0 0 1 4.4 2.3V3.6" fill="none" stroke="#1762b8" stroke-width="1.1"/><rect x=".6" y="3.7" width="4.9" height="3.6" fill="#fff" stroke="#1762b8" stroke-width="1.1"/></svg>
<svg style="left:50px;top:418px" width="16" height="12" viewBox="0 0 16 12"><text x="7.5" y="9.6" font-family="Liberation Sans, sans-serif" font-weight="bold" font-size="10.5" fill="#1863b5" text-anchor="middle" letter-spacing="-0.2">VB</text></svg>
<span class="tx" style="left:70.9px;top:417.0px;letter-spacing:-0.093px;">MyDXLayeredWindow.vb</span>
<svg style="left:28px;top:437px" width="7" height="11" viewBox="0 0 7 11"><path d="M1.6 1L6 5.5L1.6 10Z" fill="#fff" stroke="#1a1a1a" stroke-width="1.1"/></svg>
<svg style="left:41px;top:439px" width="7" height="8" viewBox="0 0 7 8"><path d="M1.7 3.6V2.3A1.35 1.5 0 0 1 4.4 2.3V3.6" fill="none" stroke="#1762b8" stroke-width="1.1"/><rect x=".6" y="3.7" width="4.9" height="3.6" fill="#fff" stroke="#1762b8" stroke-width="1.1"/></svg>
<svg style="left:50px;top:437px" width="16" height="12" viewBox="0 0 16 12"><text x="7.5" y="9.6" font-family="Liberation Sans, sans-serif" font-weight="bold" font-size="10.5" fill="#1863b5" text-anchor="middle" letter-spacing="-0.2">VB</text></svg>
<span class="tx" style="left:70.9px;top:436.0px;letter-spacing:-0.340px;">User.vb</span>
<svg style="left:41px;top:458px" width="7" height="8" viewBox="0 0 7 8"><path d="M1.7 3.6V2.3A1.35 1.5 0 0 1 4.4 2.3V3.6" fill="none" stroke="#1762b8" stroke-width="1.1"/><rect x=".6" y="3.7" width="4.9" height="3.6" fill="#fff" stroke="#1762b8" stroke-width="1.1"/></svg>
<svg style="left:51px;top:453px" width="14" height="15" viewBox="0 0 14 15"><path d="M1.5 .8H8.8L12.5 4.4V14.2H1.5Z" fill="#f0f0f3" stroke="#3c3c3c" stroke-width="1.1"/><path d="M8.8 .8V4.4H12.5" fill="none" stroke="#3c3c3c"/><path d="M3.5 4.5H8M10.5 7V11.5" stroke="#333" stroke-dasharray="1 1" stroke-width="1"/><path d="M5.6 6.6L6.4 8.6L8.5 8.7L6.9 10L7.5 12L5.6 10.9L3.8 12L4.4 10L2.8 8.7L4.9 8.6Z" fill="#111"/></svg>
<span class="tx" style="left:70.9px;top:455.0px;letter-spacing:0.228px;">ww-logo.ico</span>
</div></div>
<div id="wm" dir="rtl" lang="ar">خمسات</div>
<div id="shade"></div>
<div id="bl1"></div><div id="bl2"></div>
<div id="tip"><span>System Settings</span></div>
<svg style="left:889px;top:897px" width="14" height="3" viewBox="0 0 14 3"><path d="M0 0H14L9 3H5Z" fill="#5f5f5f"/></svg>
</div>
</body></html>
